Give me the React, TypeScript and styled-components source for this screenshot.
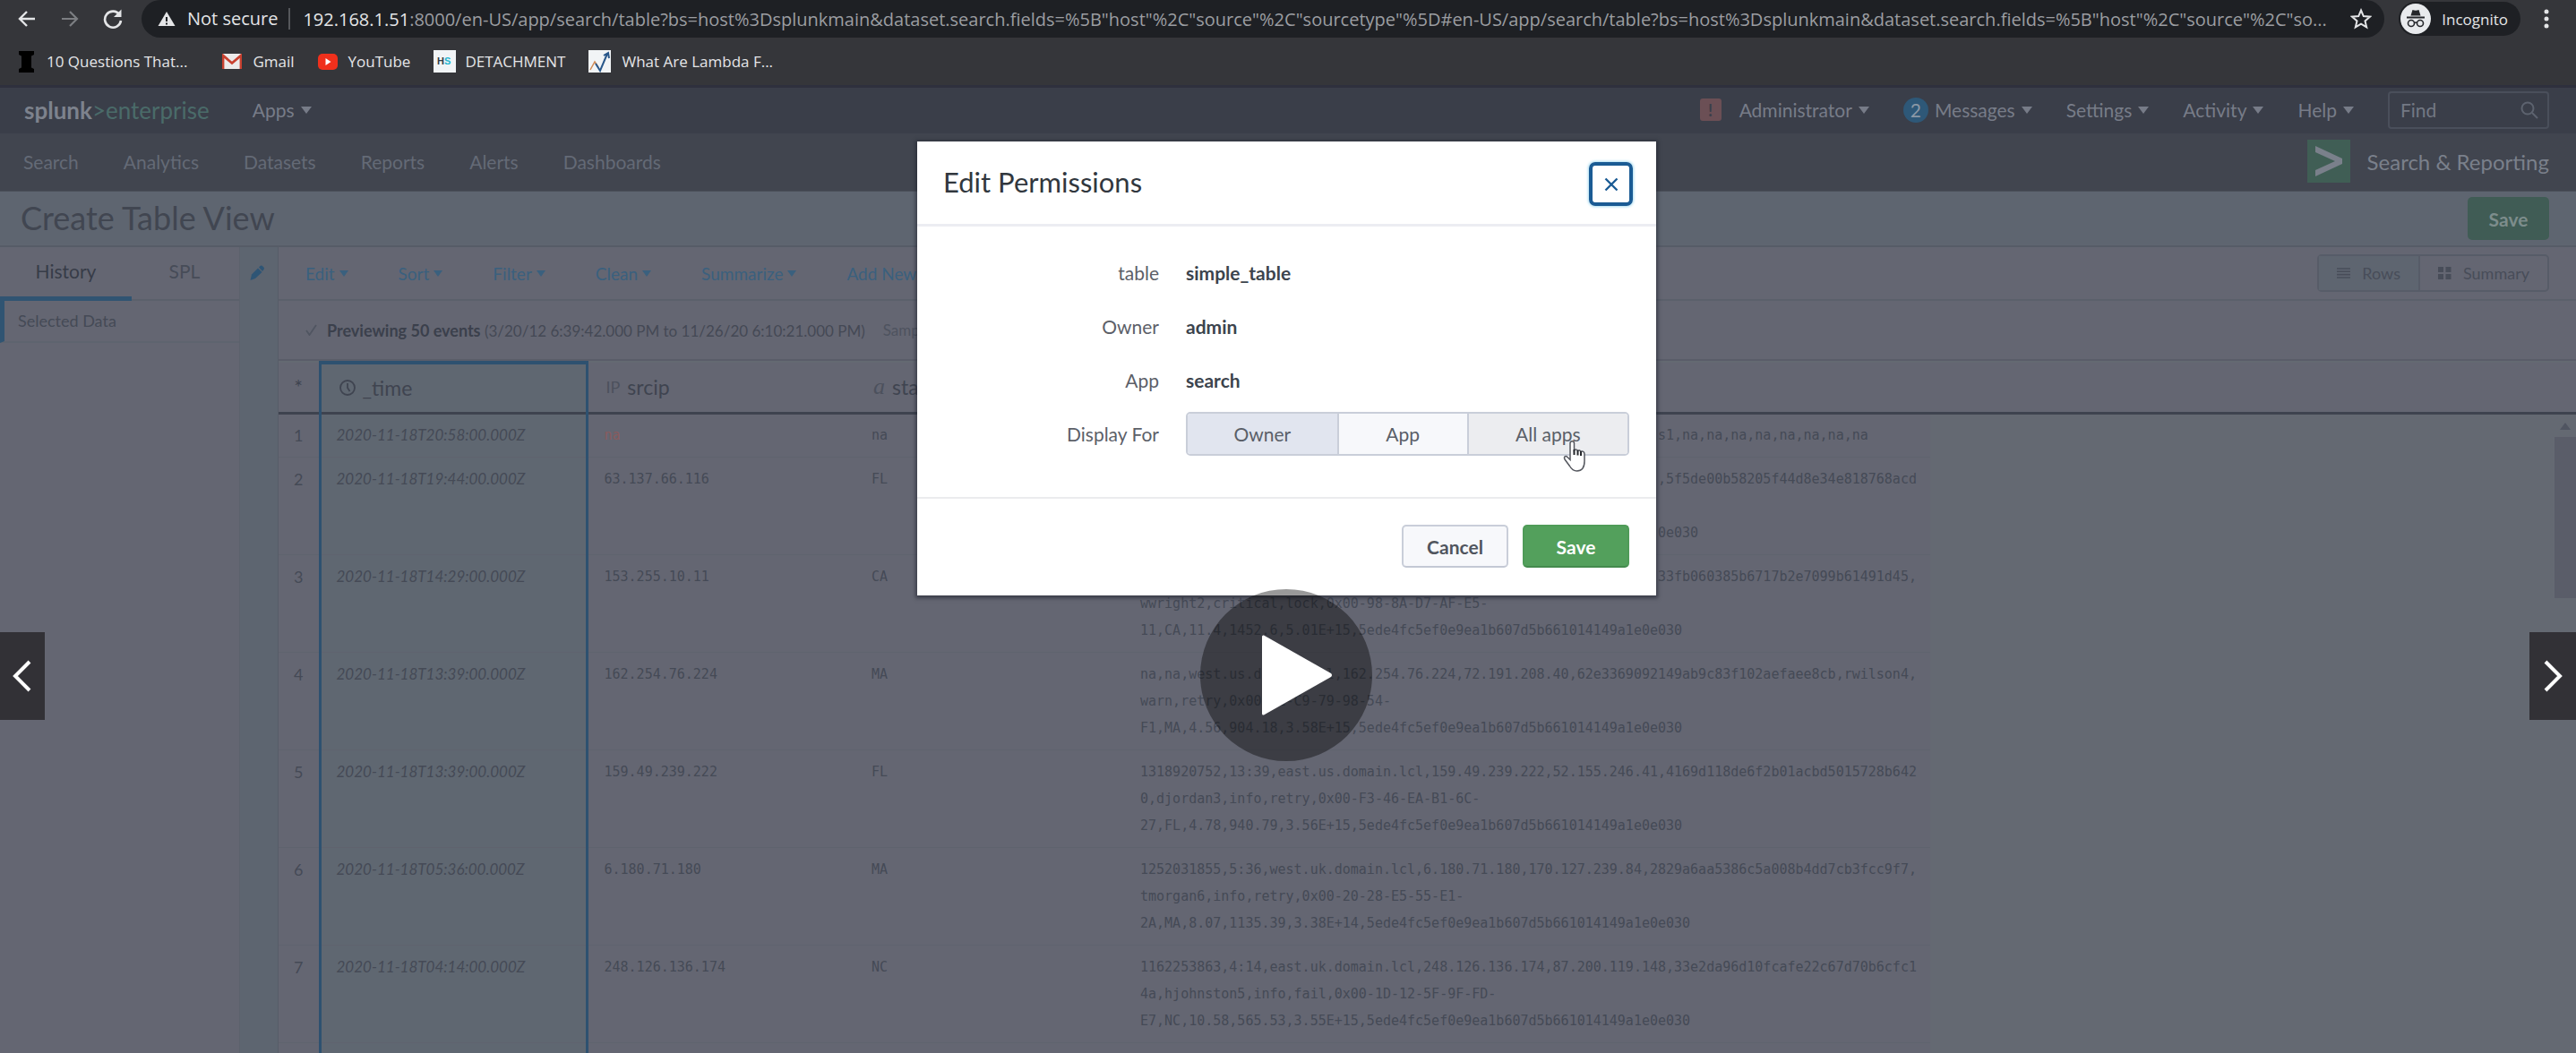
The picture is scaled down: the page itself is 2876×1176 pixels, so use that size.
import React from "react";
import styled, { createGlobalStyle, css } from "styled-components";

const GlobalStyle = createGlobalStyle`
  *, *::before, *::after { box-sizing: border-box; }
  body { margin: 0; background: #646672; font-family: Lato, "Open Sans", sans-serif; }
  button, input { font: inherit; color: inherit; }
  button { cursor: pointer; background: none; border: 0; padding: 0; }
  a { color: inherit; text-decoration: none; }
`;

const Page = styled.div`
  position: relative;
  display: flex;
  flex-direction: column;
  height: 100vh;
  overflow: hidden;
  color: #444955;
`;

/* ---------- Browser chrome ---------- */

const Browser = styled.header`
  flex: none;
  background: #35363a;
  color: #e4e5e7;
  font-family: "Open Sans", "Noto Sans", sans-serif;
  border-bottom: 3px solid #2e303d;
`;

const AddressRow = styled.div`
  display: flex;
  align-items: center;
  height: 42px;
  padding-left: 18px;
  padding-right: 28px;
`;

const NavButtons = styled.div`
  display: flex;
  align-items: center;
  gap: 24px;
  width: 140px;
`;

const IconButton = styled.button<{ $dim?: boolean }>`
  display: flex;
  color: ${(p) => (p.$dim ? "#7c7e82" : "#e4e5e7")};
`;

const AddressBar = styled.div`
  flex: 1;
  min-width: 0;
  display: flex;
  align-items: center;
  height: 42px;
  padding: 0 14px 0 18px;
  border-radius: 21px;
  background: #1e2024;
  font-size: 20px;
  white-space: nowrap;
`;

const Security = styled.span`
  margin-left: 13px;
  padding-right: 12px;
  border-right: 2px solid #55575b;
  line-height: 24px;
`;

const Url = styled.span`
  flex: 1;
  min-width: 0;
  overflow: hidden;
  margin-left: 14px;
  color: #9b9da1;
  b { font-weight: 400; color: #e4e5e7; }
`;

const IncognitoPill = styled.div`
  display: flex;
  align-items: center;
  gap: 12px;
  height: 38px;
  margin: 0 24px 0 16px;
  padding: 0 14px 0 2px;
  border-radius: 19px;
  background: #1e2024;
  font-size: 17px;
`;

const Bookmarks = styled.nav`
  display: flex;
  align-items: center;
  gap: 26px;
  height: 53px;
  padding-left: 20px;
  font-size: 17px;
`;

const Bookmark = styled.a<{ $tight?: boolean }>`
  display: flex;
  align-items: center;
  gap: ${(p) => (p.$tight ? 10 : 12)}px;
  &:first-child { margin-right: 13px; }
`;

/* ---------- Splunk bars ---------- */

const TopBar = styled.div`
  flex: none;
  display: flex;
  align-items: center;
  height: 51px;
  padding: 0 30px 2px 27px;
  background: #3a3e49;
  color: #777c88;
  font-size: 21px;
`;

const Brand = styled.a`
  margin-right: 48px;
  font-size: 26px;
  color: #4a6b69;
  b { font-weight: 700; color: #7d828d; }
`;

const MenuButton = styled.button<{ $blue?: boolean }>`
  display: flex;
  align-items: center;
  gap: ${(p) => (p.$blue ? 5 : 7)}px;
  color: ${(p) => (p.$blue ? "#3a607e" : "inherit")};
`;

const Caret = styled.span<{ $small?: boolean }>`
  border: ${(p) => (p.$small ? 5 : 6)}px solid transparent;
  border-top: ${(p) => (p.$small ? 7 : 8)}px solid currentColor;
  border-bottom: 0;
`;

const TopRight = styled.div`
  display: flex;
  align-items: center;
  gap: 38px;
  margin-left: auto;
`;

const Account = styled.div`
  display: flex;
  align-items: center;
  gap: 20px;
`;

const Alert = styled.span`
  display: grid;
  place-items: center;
  width: 24px;
  height: 25px;
  border-radius: 3px;
  background: #6b4f55;
  color: #3a3e49;
  font-size: 18px;
  font-weight: 700;
`;

const Count = styled.span`
  display: grid;
  place-items: center;
  width: 28px;
  height: 28px;
  border-radius: 50%;
  background: #2e5878;
  color: #8b98a6;
`;

const FindBox = styled.label`
  display: flex;
  align-items: center;
  width: 180px;
  height: 42px;
  padding: 0 10px 0 12px;
  border: 2px solid #4a4f5b;
  border-radius: 4px;
  input {
    flex: 1;
    min-width: 0;
    padding: 0;
    border: 0;
    outline: 0;
    background: none;
  }
  input::placeholder { color: #737884; opacity: 1; }
`;

const AppBar = styled.nav`
  flex: none;
  display: flex;
  align-items: center;
  gap: 50px;
  height: 65px;
  padding: 0 30px 2px 26px;
  border-bottom: 1px solid #4a4f59;
  background: #41454f;
  color: #646a76;
  font-size: 21px;
`;

const AppName = styled.a`
  display: flex;
  align-items: center;
  gap: 19px;
  margin-left: auto;
  color: #7a808b;
  font-size: 24px;
`;

const TitleBar = styled.div`
  flex: none;
  display: flex;
  align-items: center;
  justify-content: space-between;
  height: 62px;
  padding: 0 30px 0 23px;
  border-bottom: 2px solid #565c67;
  background: #5e6570;
  h1 {
    margin: 0;
    padding-bottom: 3px;
    font-size: 36px;
    font-weight: 400;
    color: #414651;
  }
`;

const DimSave = styled.button`
  width: 91px;
  height: 48px;
  border-radius: 5px;
  background: #405c55;
  color: #7d8d8c;
  font-size: 21px;
  font-weight: 700;
`;

/* ---------- Workspace ---------- */

const Workspace = styled.div`
  flex: 1;
  min-height: 0;
  display: flex;
`;

const Sidebar = styled.aside`
  flex: none;
  width: 268px;
  border-right: 1px solid #5c616c;
`;

const Tabs = styled.div`
  display: flex;
  height: 60px;
  border-bottom: 2px solid #5b606b;
`;

const Tab = styled.button<{ $active?: boolean; $width: number }>`
  width: ${(p) => p.$width}px;
  padding-bottom: ${(p) => (p.$active ? 2 : 6)}px;
  font-size: 21px;
  color: ${(p) => (p.$active ? "#373c48" : "#474c58")};
  ${(p) => p.$active && css`height: 60px; border-bottom: 5px solid #305472;`}
`;

const Step = styled.button`
  display: block;
  width: 100%;
  height: 47px;
  padding-left: 15px;
  padding-bottom: 2px;
  border-left: 5px solid #305472;
  border-bottom: 2px solid #5e646f;
  text-align: left;
  font-size: 18px;
  color: #454a56;
`;

const Strip = styled.div`
  flex: none;
  width: 43px;
  padding: 20px 0 0 10px;
  border-right: 1px solid #575d68;
  background: #5d6570;
`;

const Main = styled.main`
  flex: 1;
  min-width: 0;
  display: flex;
  flex-direction: column;
`;

const Toolbar = styled.div`
  flex: none;
  display: flex;
  align-items: center;
  gap: 56px;
  height: 60px;
  padding: 0 30px;
  border-bottom: 2px solid #5b606b;
  font-size: 19px;
`;

const ViewSwitch = styled.div`
  display: flex;
  height: 42px;
  margin-left: auto;
  border: 2px solid #575c68;
  border-radius: 5px;
  color: #484d59;
  font-size: 18px;
`;

const ViewButton = styled.button<{ $on?: boolean }>`
  display: flex;
  align-items: center;
  gap: 13px;
  padding: 0 20px;
  background: ${(p) => (p.$on ? "#5e6570" : "transparent")};
  & + & { border-left: 2px solid #575c68; }
`;

const Info = styled.div`
  flex: none;
  display: flex;
  align-items: center;
  gap: 11px;
  height: 67px;
  padding-left: 30px;
  border-bottom: 2px solid #5a5d69;
  font-size: 17px;
  white-space: nowrap;
  b { font-size: 18px; color: #3b404c; }
  span + span { margin-left: 9px; color: #4e535f; }
`;

const Results = styled.div`
  flex: 1;
  min-height: 0;
  display: flex;
  flex-direction: column;
  background: #646972;
`;

const Table = styled.table`
  width: 100%;
  table-layout: fixed;
  border-collapse: collapse;
  font-family: "DejaVu Sans Mono", monospace;
  font-size: 15px;
  line-height: 30px;
  thead { background: #646672; font-family: Lato, sans-serif; }
  thead tr { height: 56px; border-bottom: 3px solid #3e434f; }
`;

const timeColumn = css`
  background: #5f6771;
  border-left: 3px solid #2e5170;
  border-right: 3px solid #2e5170;
`;

const HeadCell = styled.th<{ $time?: boolean }>`
  padding: 0 20px;
  text-align: left;
  font-weight: 400;
  font-size: 23px;
  color: #3f4450;
  ${(p) => p.$time && css`${timeColumn} border-top: 4px solid #2e5170;`}
  &:first-child { padding: 0; text-align: center; }
`;

const HeadLabel = styled.span`
  display: flex;
  align-items: center;
  gap: 8px;
  small { font-size: 18px; color: #4c515d; }
  i { font-family: "Liberation Serif", serif; font-size: 26px; color: #4c515d; }
`;

const Cell = styled.td<{ $kind?: "index" | "time" | "null" | "rest" }>`
  padding: 9px 18px;
  vertical-align: top;
  white-space: pre;
  background: #646672;
  border-bottom: 1px solid #5f636e;
  color: #454a56;
  ${(p) => p.$kind === "index" && css`
    padding-left: 0;
    padding-right: 0;
    text-align: center;
    font-family: Lato, sans-serif;
    font-size: 18px;
  `}
  ${(p) => p.$kind === "time" && css`
    ${timeColumn}
    padding-left: 17px;
    font-family: Lato, sans-serif;
    font-size: 17px;
    font-style: italic;
  `}
  ${(p) => p.$kind === "null" && css`color: #895b5e;`}
  ${(p) => p.$kind === "rest" && css`background: transparent; border-bottom: 0;`}
`;

const RawLine = styled.div<{ $indent: number }>`
  height: 30px;
  margin-left: ${(p) => p.$indent}ch;
`;

const Row = styled.tr<{ $short?: boolean; $end?: boolean }>`
  ${(p) => p.$short && css`td { padding-top: 8px; padding-bottom: 9px; }`}
  ${(p) => p.$end && css`height: 30px;`}
`;

const ScrollArea = styled.div`
  position: absolute;
  top: 462px;
  right: 0;
  bottom: 0;
  width: 24px;
  display: flex;
  flex-direction: column;
  align-items: center;
  gap: 8px;
  padding-top: 10px;
  color: #505561;
  &::before {
    content: "";
    border: 6px solid transparent;
    border-bottom: 8px solid currentColor;
    border-top: 0;
  }
  &::after {
    content: "";
    width: 24px;
    height: 180px;
    background: #5a5d69;
  }
`;

/* ---------- Dialog ---------- */

const Dialog = styled.section`
  position: absolute;
  top: 158px;
  left: 50%;
  width: 825px;
  margin-left: -414px;
  background: #fff;
  color: #3c444d;
  font-size: 21px;
  box-shadow: 0 1px 4px 2px rgba(30, 33, 45, 0.6);
`;

const DialogHeader = styled.div`
  display: flex;
  align-items: center;
  justify-content: space-between;
  height: 95px;
  padding: 0 26px 0 29px;
  border-bottom: 3px solid #ecedf2;
  h2 {
    margin: 0;
    padding-bottom: 2px;
    font-size: 31px;
    font-weight: 400;
    color: #31373e;
  }
`;

const Close = styled.button`
  display: grid;
  place-items: center;
  width: 49px;
  height: 49px;
  margin-top: 3px;
  border: 4px solid #1a5b94;
  border-radius: 7px;
  color: #1a5b94;
  box-shadow: 0 0 3px 1px #a9dcf0;
`;

const DialogBody = styled.div`
  display: grid;
  grid-template-columns: 240px 1fr;
  column-gap: 30px;
  grid-auto-rows: 60px;
  align-items: center;
  padding: 21px 30px 41px;
`;

const FieldLabel = styled.span`
  text-align: right;
  color: #5c6068;
`;

const Segments = styled.div`
  display: flex;
  height: 49px;
  border: 2px solid #c9ced9;
  border-radius: 5px;
  overflow: hidden;
`;

const Segment = styled.label<{ $bg: string; $width: number }>`
  position: relative;
  flex: ${(p) => p.$width};
  display: flex;
  align-items: center;
  justify-content: center;
  background: ${(p) => p.$bg};
  color: #5a5f68;
  & + & { border-left: 2px solid #c9ced9; }
  input {
    position: absolute;
    top: 0;
    left: 0;
    width: 1px;
    height: 1px;
    margin: 0;
    appearance: none;
  }
`;

const DialogFooter = styled.div`
  display: flex;
  justify-content: flex-end;
  gap: 16px;
  padding: 29px 30px 31px;
  border-top: 2px solid #ebecee;
`;

const DialogButton = styled.button<{ $primary?: boolean }>`
  width: 119px;
  height: 48px;
  border: 2px solid ${(p) => (p.$primary ? "#4f9b58" : "#c9ced9")};
  border-bottom-color: ${(p) => (p.$primary ? "#438a4d" : "#c3c8d4")};
  border-radius: 5px;
  background: ${(p) => (p.$primary ? "#53a05c" : "#f7f8fb")};
  color: ${(p) => (p.$primary ? "#fff" : "#50555e")};
  font-weight: 700;
`;

const Pointer = styled.svg`
  position: absolute;
  top: 334px;
  left: 721px;
`;

/* ---------- Player controls ---------- */

const PlayButton = styled.button`
  position: absolute;
  top: 658px;
  left: 50%;
  display: grid;
  place-items: center;
  width: 192px;
  height: 192px;
  margin-left: -98px;
  padding-left: 24px;
  border-radius: 50%;
  background: rgba(0, 0, 0, 0.4);
`;

const SlideButton = styled.button<{ $side: "left" | "right" }>`
  position: absolute;
  top: 706px;
  ${(p) => p.$side}: 0;
  display: grid;
  place-items: center;
  width: ${(p) => (p.$side === "left" ? 50 : 52)}px;
  height: 98px;
  background: #323136;
`;

type RawText = { text: string; indent?: number };
type ResultRow = { time: string; srcip: string; state: string; raw: RawText[] };

const rows: ResultRow[] = [
  {
    time: "2020-11-18T20:58:00.000Z", srcip: "na", state: "na",
    raw: [{ text: "s1,na,na,na,na,na,na,na,na", indent: 64 }],
  },
  {
    time: "2020-11-18T19:44:00.000Z", srcip: "63.137.66.116", state: "FL",
    raw: [
      { text: ",5f5de00b58205f44d8e34e818768acd", indent: 64 },
      { text: "" },
      { text: "0e030", indent: 64 },
    ],
  },
  {
    time: "2020-11-18T14:29:00.000Z", srcip: "153.255.10.11", state: "CA",
    raw: [
      { text: "33fb060385b6717b2e7099b61491d45,", indent: 64 },
      { text: "wwright2,critical,lock,0x00-98-8A-D7-AF-E5-" },
      { text: "11,CA,11.4,1452.6,5.01E+15,5ede4fc5ef0e9ea1b607d5b661014149a1e0e030" },
    ],
  },
  {
    time: "2020-11-18T13:39:00.000Z", srcip: "162.254.76.224", state: "MA",
    raw: [
      { text: "na,na,west.us.domain.lcl,162.254.76.224,72.191.208.40,62e3369092149ab9c83f102aefaee8cb,rwilson4," },
      { text: "warn,retry,0x00-A1-C9-79-98-54-" },
      { text: "F1,MA,4.56,904.18,3.58E+15,5ede4fc5ef0e9ea1b607d5b661014149a1e0e030" },
    ],
  },
  {
    time: "2020-11-18T13:39:00.000Z", srcip: "159.49.239.222", state: "FL",
    raw: [
      { text: "1318920752,13:39,east.us.domain.lcl,159.49.239.222,52.155.246.41,4169d118de6f2b01acbd5015728b642" },
      { text: "0,djordan3,info,retry,0x00-F3-46-EA-B1-6C-" },
      { text: "27,FL,4.78,940.79,3.56E+15,5ede4fc5ef0e9ea1b607d5b661014149a1e0e030" },
    ],
  },
  {
    time: "2020-11-18T05:36:00.000Z", srcip: "6.180.71.180", state: "MA",
    raw: [
      { text: "1252031855,5:36,west.uk.domain.lcl,6.180.71.180,170.127.239.84,2829a6aa5386c5a008b4dd7cb3fcc9f7," },
      { text: "tmorgan6,info,retry,0x00-20-28-E5-55-E1-" },
      { text: "2A,MA,8.07,1135.39,3.38E+14,5ede4fc5ef0e9ea1b607d5b661014149a1e0e030" },
    ],
  },
  {
    time: "2020-11-18T04:14:00.000Z", srcip: "248.126.136.174", state: "NC",
    raw: [
      { text: "1162253863,4:14,east.uk.domain.lcl,248.126.136.174,87.200.119.148,33e2da96d10fcafe22c67d70b6cfc1" },
      { text: "4a,hjohnston5,info,fail,0x00-1D-12-5F-9F-FD-" },
      { text: "E7,NC,10.58,565.53,3.55E+15,5ede4fc5ef0e9ea1b607d5b661014149a1e0e030" },
    ],
  },
];

function BrowserChrome() {
  return (
    <Browser>
      <AddressRow>
        <NavButtons>
          <IconButton aria-label="Back">
            <svg width="24" height="24" viewBox="0 0 24 24" fill="none" stroke="currentColor" strokeWidth="2.4"><path d="M21 12H4M12 4l-8 8 8 8" /></svg>
          </IconButton>
          <IconButton aria-label="Forward" $dim>
            <svg width="24" height="24" viewBox="0 0 24 24" fill="none" stroke="currentColor" strokeWidth="2.2"><path d="M3 12h17M12 4l8 8-8 8" /></svg>
          </IconButton>
          <IconButton aria-label="Reload">
            <svg width="24" height="24" viewBox="0 0 24 24" fill="none" stroke="currentColor" strokeWidth="2.6"><path d="M19.500 7.500A9 9 0 1 0 21 14" /><path d="M21.500 1.500v8.500h-8.500z" fill="currentColor" stroke="none" /></svg>
          </IconButton>
        </NavButtons>
        <AddressBar>
          <svg width="20" height="18" viewBox="0 0 20 18"><path d="M10 1L19.500 17H.5z" fill="#e4e5e7" /><path d="M10 7v5M10 13.500v2" stroke="#1e2024" strokeWidth="2" /></svg>
          <Security>Not secure</Security>
          <Url>
            <b>192.168.1.51</b>:8000/en-US/app/search/table?bs=host%3Dsplunkmain&amp;dataset.search.fields=%5B"host"%2C"source"%2C"sourcetype"%5D#en-US/app/search/table?bs=host%3Dsplunkmain&amp;dataset.search.fields=%5B"host"%2C"source"%2C"so...
          </Url>
          <IconButton aria-label="Bookmark this page">
            <svg width="24" height="24" viewBox="0 0 24 24" fill="none" stroke="currentColor" strokeWidth="2"><path d="M12 2.500l2.800 6.600 7.200.6-5.500 4.700 1.700 7L12 17.600l-6.200 3.800 1.700-7L2 9.700l7.200-.6z" /></svg>
          </IconButton>
        </AddressBar>
        <IncognitoPill>
          <svg width="34" height="34" viewBox="0 0 34 34">
            <circle cx="17" cy="17" r="17" fill="#e8eaed" />
            <path d="M11.500 13.500l2-6.500q3.500 1.600 7 0l2 6.500z" fill="#25272b" />
            <path d="M7 15.500h20" stroke="#25272b" strokeWidth="2" />
            <g fill="none" stroke="#25272b" strokeWidth="1.600"><circle cx="12" cy="22" r="3.500" /><circle cx="22" cy="22" r="3.500" /><path d="M15.500 21.500q1.500-1 3 0" /></g>
          </svg>
          Incognito
        </IncognitoPill>
        <IconButton aria-label="Menu">
          <svg width="10" height="24" viewBox="0 0 10 24" fill="currentColor"><circle cx="5" cy="4" r="2.500" /><circle cx="5" cy="12" r="2.500" /><circle cx="5" cy="20" r="2.500" /></svg>
        </IconButton>
      </AddressRow>
      <Bookmarks>
        <Bookmark href="#">
          <svg width="20" height="24" viewBox="0 0 20 24"><path d="M1 0h17v4l-3 1.500v13l3 1.500v4H1v-4l3-1.500v-13L1 4z" fill="#000" /></svg>
          10 Questions That...
        </Bookmark>
        <Bookmark href="#">
          <svg width="22" height="17" viewBox="0 0 22 17"><path d="M0 0h22v17H0z" fill="#eceaea" /><path d="M1 17V2l10 8.500L21 2v15" fill="none" stroke="#c8402f" strokeWidth="2.800" /></svg>
          Gmail
        </Bookmark>
        <Bookmark href="#">
          <svg width="22" height="18" viewBox="0 0 22 18"><rect width="22" height="18" rx="5" fill="#f0301c" /><path d="M8.500 5l6 4-6 4z" fill="#fff" /></svg>
          YouTube
        </Bookmark>
        <Bookmark href="#" $tight>
          <svg width="25" height="25" viewBox="0 0 25 25"><path d="M0 0h25v25H0z" fill="#f1f4f6" /><g fontFamily="Liberation Sans" fontWeight="700" fontSize="11"><text x="4" y="16" fill="#303a44">H</text><text x="12" y="16" fill="#23b5cf">S</text></g></svg>
          DETACHMENT
        </Bookmark>
        <Bookmark href="#">
          <svg width="25" height="25" viewBox="0 0 25 25" fill="none"><path d="M0 0h25v25H0z" fill="#f1f4f6" /><path d="M2 22l5-9 4 6" stroke="#d08a55" strokeWidth="1.500" /><path d="M8 15l5 8 8-19M17 6l5-3 1 6" stroke="#28578a" strokeWidth="2" /></svg>
          What Are Lambda F...
        </Bookmark>
      </Bookmarks>
    </Browser>
  );
}

function EditPermissions() {
  return (
    <Dialog role="dialog" aria-labelledby="dialog-title">
      <DialogHeader>
        <h2 id="dialog-title">Edit Permissions</h2>
        <Close aria-label="Close">
          <svg width="16" height="16" viewBox="0 0 16 16" stroke="currentColor" strokeWidth="2.400"><path d="M1.500 1.500l13 13M14.500 1.500l-13 13" /></svg>
        </Close>
      </DialogHeader>
      <DialogBody>
        <FieldLabel>table</FieldLabel><b>simple_table</b>
        <FieldLabel>Owner</FieldLabel><b>admin</b>
        <FieldLabel>App</FieldLabel><b>search</b>
        <FieldLabel id="display-for">Display For</FieldLabel>
        <Segments role="radiogroup" aria-labelledby="display-for">
          <Segment $bg="#e1e5ef" $width={169}><input type="radio" name="display" defaultChecked />Owner</Segment>
          <Segment $bg="#f7f8fb" $width={145}><input type="radio" name="display" />App</Segment>
          <Segment $bg="#ecedf0" $width={180}><input type="radio" name="display" />All apps</Segment>
        </Segments>
      </DialogBody>
      <DialogFooter>
        <DialogButton>Cancel</DialogButton>
        <DialogButton $primary>Save</DialogButton>
      </DialogFooter>
      <Pointer width="28" height="36" viewBox="0 0 28 36">
        <path d="M8 3c0-3 4.500-3 4.500 0v8c1-1.500 3.500-1 4 .5 1-1 3-.5 3.500 1 1.500-1 4 0 4 2.500v8c0 7-3 11-8.500 11-4 0-6-2-8-5.500L2 21c-1.500-3 1-4.500 3-2.500l3 3z" fill="#fff" stroke="#55585f" strokeWidth="1.500" />
        <path d="M12.500 10v6M16.500 11v5.500M20 12v5" stroke="#26282d" strokeWidth="2" />
      </Pointer>
    </Dialog>
  );
}

const toolMenus = ["Edit", "Sort", "Filter", "Clean", "Summarize", "Add New"];

export default function App() {
  return (
    <Page>
      <GlobalStyle />
      <BrowserChrome />
      <TopBar>
        <Brand href="#"><b>splunk</b>&gt;enterprise</Brand>
        <MenuButton>Apps<Caret /></MenuButton>
        <TopRight>
          <Account>
            <Alert>!</Alert>
            <MenuButton>Administrator<Caret /></MenuButton>
          </Account>
          <MenuButton><Count>2</Count>Messages<Caret /></MenuButton>
          <MenuButton>Settings<Caret /></MenuButton>
          <MenuButton>Activity<Caret /></MenuButton>
          <MenuButton>Help<Caret /></MenuButton>
          <FindBox>
            <input type="text" placeholder="Find" aria-label="Find" />
            <svg width="20" height="20" viewBox="0 0 20 20" fill="none" stroke="#5d636f" strokeWidth="2"><circle cx="8" cy="8" r="6.500" /><path d="M13 13l6 6" /></svg>
          </FindBox>
        </TopRight>
      </TopBar>
      <AppBar>
        {["Search", "Analytics", "Datasets", "Reports", "Alerts", "Dashboards"].map((name) => (
          <a href="#" key={name}>{name}</a>
        ))}
        <AppName href="#">
          <svg width="48" height="48" viewBox="0 0 48 48"><path d="M0 0h48v48H0z" fill="#405e55" /><path d="M9 7l30 14v6L9 41v-7l22-10L9 14z" fill="#7a808b" /></svg>
          Search &amp; Reporting
        </AppName>
      </AppBar>
      <TitleBar>
        <h1>Create Table View</h1>
        <DimSave>Save</DimSave>
      </TitleBar>
      <Workspace>
        <Sidebar>
          <Tabs>
            <Tab $active $width={147}>History</Tab>
            <Tab $width={118}>SPL</Tab>
          </Tabs>
          <Step>Selected Data</Step>
        </Sidebar>
        <Strip>
          <IconButton aria-label="Edit step">
            <svg width="18" height="18" viewBox="0 0 18 18"><path d="M3 10.500L10 3.500l4.500 4.500-7.500 7L1.500 17z" fill="#2e5575" /><path d="M11 2.500l1.500-1.500q1.500-1 3 .5l1 1q1 1.500 0 2.500L15 7z" fill="#2e5575" /></svg>
          </IconButton>
        </Strip>
        <Main>
          <Toolbar>
            {toolMenus.map((name) => (
              <MenuButton $blue key={name}>{name}<Caret $small /></MenuButton>
            ))}
            <ViewSwitch>
              <ViewButton $on>
                <svg width="15" height="12" viewBox="0 0 15 12" stroke="currentColor" strokeWidth="1.600"><path d="M0 1h15M0 4.300h15M0 7.600h15M0 11h15" /></svg>
                Rows
              </ViewButton>
              <ViewButton>
                <svg width="15" height="14" viewBox="0 0 15 14" fill="currentColor"><path d="M0 0h6v6H0zM8.500 0h6v6h-6zM0 8h6v6H0zM8.500 8h6v6h-6z" /></svg>
                Summary
              </ViewButton>
            </ViewSwitch>
          </Toolbar>
          <Info>
            <svg width="13" height="13" viewBox="0 0 13 13" fill="none" stroke="#505561" strokeWidth="1.800"><path d="M1 7l3.500 5L12 1" /></svg>
            <span><b>Previewing 50 events</b> (3/20/12 6:39:42.000 PM to 11/26/20 6:10:21.000 PM)</span>
            <span>Sample</span>
          </Info>
          <Results>
            <Table>
              <colgroup>
                <col style={{ width: 46 }} />
                <col style={{ width: 298 }} />
                <col style={{ width: 300 }} />
                <col style={{ width: 300 }} />
                <col style={{ width: 900 }} />
                <col />
              </colgroup>
              <thead>
                <tr>
                  <HeadCell>*</HeadCell>
                  <HeadCell $time>
                    <HeadLabel>
                      <svg width="18" height="18" viewBox="0 0 18 18" fill="none" stroke="currentColor" strokeWidth="1.800"><circle cx="9" cy="9" r="8" /><path d="M9 4v5l2.500 4" /></svg>
                      _time
                    </HeadLabel>
                  </HeadCell>
                  <HeadCell><HeadLabel><small>IP</small>srcip</HeadLabel></HeadCell>
                  <HeadCell><HeadLabel><i>a</i>state</HeadLabel></HeadCell>
                  <HeadCell />
                  <HeadCell />
                </tr>
              </thead>
              <tbody>
                {rows.map((row, i) => (
                  <Row key={i} $short={i === 0}>
                    <Cell $kind="index">{i + 1}</Cell>
                    <Cell $kind="time">{row.time}</Cell>
                    <Cell $kind={row.srcip === "na" ? "null" : undefined}>{row.srcip}</Cell>
                    <Cell>{row.state}</Cell>
                    <Cell>
                      {row.raw.map((line, n) => (
                        <RawLine key={n} $indent={line.indent ?? 0}>{line.text}</RawLine>
                      ))}
                    </Cell>
                    <Cell $kind="rest" />
                  </Row>
                ))}
                <Row $end>
                  <Cell $kind="index" />
                  <Cell $kind="time" />
                  <Cell />
                  <Cell />
                  <Cell />
                  <Cell $kind="rest" />
                </Row>
              </tbody>
            </Table>
          </Results>
        </Main>
      </Workspace>
      <ScrollArea />
      <EditPermissions />
      <PlayButton aria-label="Play">
        <svg width="80" height="92" viewBox="0 0 80 92"><path d="M3 1.500L78 44q2 2 0 4L3 90.500Q1 91 1 89V3Q1 1 3 1.500z" fill="#fff" /></svg>
      </PlayButton>
      <SlideButton $side="left" aria-label="Previous">
        <svg width="22" height="36" viewBox="0 0 22 36" fill="none" stroke="#fff" strokeWidth="4"><path d="M19 2L3 18l16 16" /></svg>
      </SlideButton>
      <SlideButton $side="right" aria-label="Next">
        <svg width="22" height="36" viewBox="0 0 22 36" fill="none" stroke="#fff" strokeWidth="4"><path d="M3 2l16 16L3 34" /></svg>
      </SlideButton>
    </Page>
  );
}
